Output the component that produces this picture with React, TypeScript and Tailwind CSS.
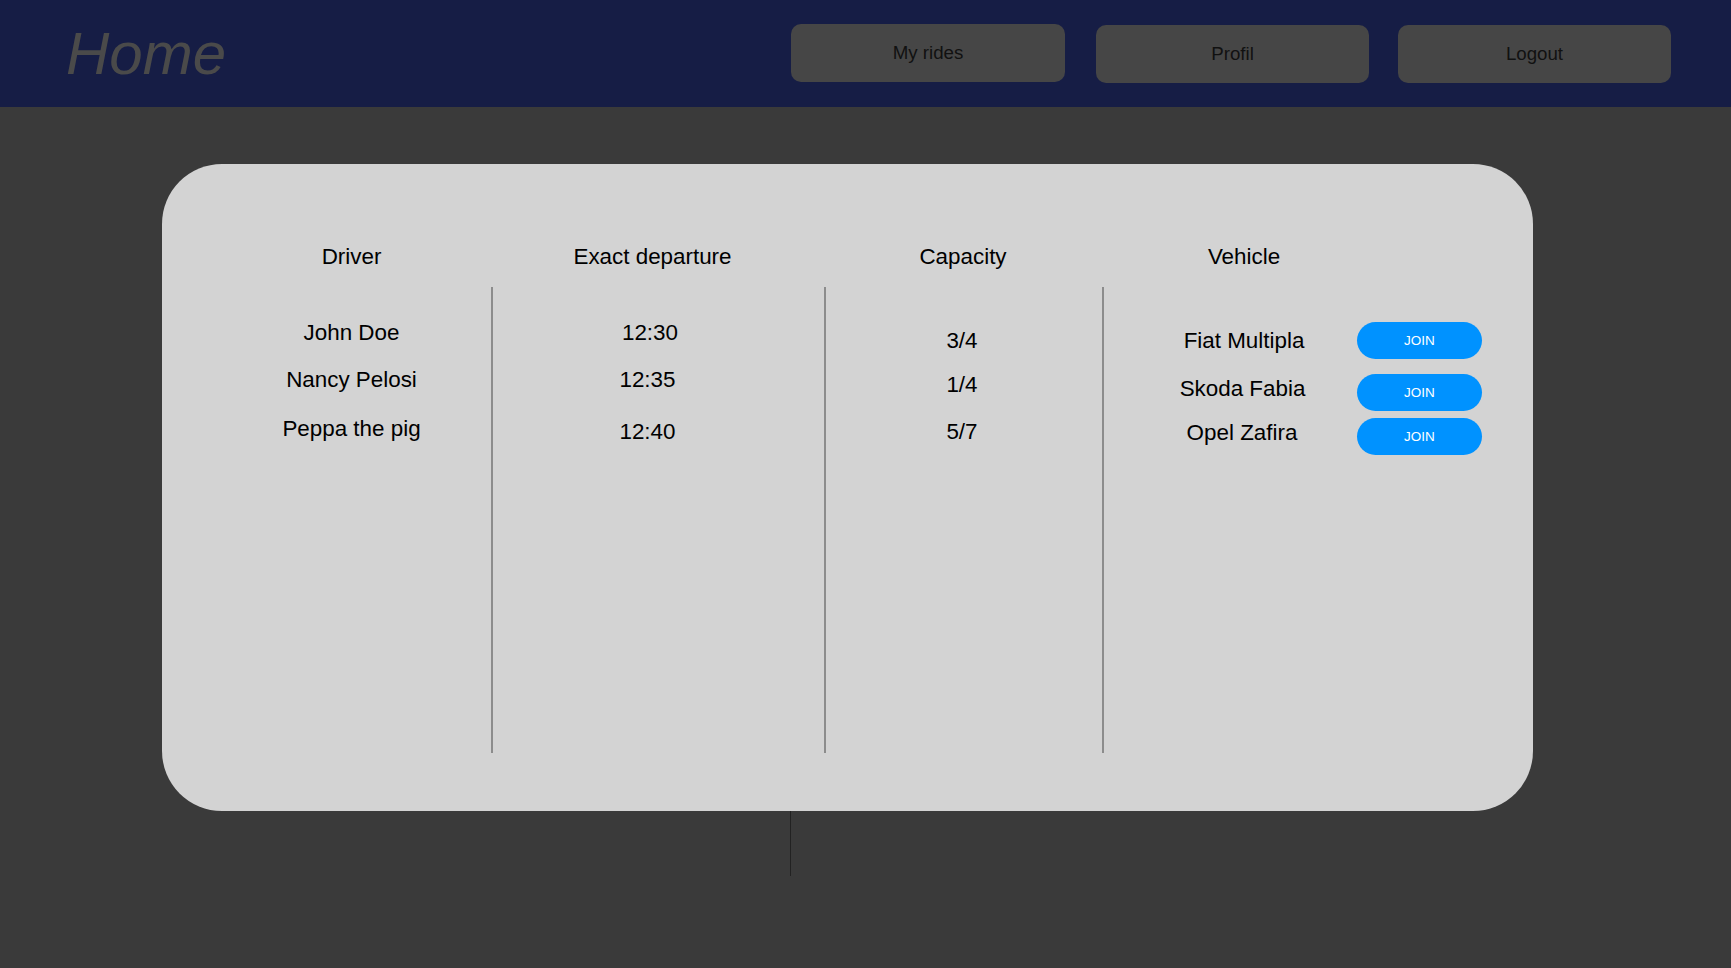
const rides = [
  { driver: 'John Doe', time: '12:30', capacity: '3/4', vehicle: 'Fiat Multipla' },
  { driver: 'Nancy Pelosi', time: '12:35', capacity: '1/4', vehicle: 'Skoda Fabia' },
  { driver: 'Peppa the pig', time: '12:40', capacity: '5/7', vehicle: 'Opel Zafira' },
];

function NavButton({ label, className = '' }: { label: string; className?: string }) {
  return (
    <button className={`h-[58px] rounded-[10px] bg-[#464646] text-[18.7px] text-[#111] ${className}`}>
      {label}
    </button>
  );
}

function JoinButton() {
  return (
    <button className="w-[125px] h-[37px] rounded-full bg-[#0092ff] text-white text-[13.5px]">
      JOIN
    </button>
  );
}

export default function App() {
  return (
    <div className="min-h-[968px] bg-[#3a3a3a] font-['Liberation_Sans',Arial,sans-serif]">
      <header className="h-[107px] bg-[#161d45] flex items-center pl-[66px] pr-[60px]">
        <h1 className="italic text-[60px] leading-none text-[#4a4a4a]">Home</h1>
        <nav className="ml-auto flex items-start">
          <NavButton label="My rides" className="w-[274px]" />
          <NavButton label="Profil" className="w-[273px] ml-[31px] mt-px" />
          <NavButton label="Logout" className="w-[273px] ml-[29px] mt-px" />
        </nav>
      </header>

      <main className="pt-[57px]">
        <div className="ml-[162px] w-[1371px] rounded-[60px] bg-[#d3d3d3] pt-[80px] pl-[50px] pr-[51px] pb-[58px] text-[22.4px] leading-[26px] text-black">
          {/* headers */}
          <div className="flex">
            <div className="w-[279px] text-center">Driver</div>
            <div className="w-[333px] pr-[10px] text-center">Exact departure</div>
            <div className="w-[278px] text-center">Capacity</div>
            <div className="flex-1 pl-[61px]">
              <div className="w-[162px] text-center">Vehicle</div>
            </div>
          </div>

          {/* body */}
          <div className="mt-[17px] flex h-[466px]">
            <div className="w-[279px] pt-[33px] flex flex-col items-center">
              <div>{rides[0].driver}</div>
              <div className="mt-[21px]">{rides[1].driver}</div>
              <div className="mt-[23px]">{rides[2].driver}</div>
            </div>

            <div className="w-[333px] border-l-2 border-[#8c8c8c] pt-[33px] pr-[22px] flex flex-col items-center">
              <div className="ml-[5px]">{rides[0].time}</div>
              <div className="mt-[21px]">{rides[1].time}</div>
              <div className="mt-[26px]">{rides[2].time}</div>
            </div>

            <div className="w-[278px] border-l-2 border-[#8c8c8c] pt-[41px] pr-[4px] flex flex-col items-center">
              <div>{rides[0].capacity}</div>
              <div className="mt-[18px]">{rides[1].capacity}</div>
              <div className="mt-[21px]">{rides[2].capacity}</div>
            </div>

            <div className="flex-1 border-l-2 border-[#8c8c8c] pt-[35px] pl-[59px] flex flex-col">
              <div className="flex items-center gap-[32px]">
                <div className="w-[162px] text-center">{rides[0].vehicle}</div>
                <JoinButton />
              </div>
              <div className="mt-[15px] flex items-center gap-[32px]">
                <div className="w-[162px] pr-[3px] text-center mb-[7px]">{rides[1].vehicle}</div>
                <JoinButton />
              </div>
              <div className="mt-[7px] flex items-center gap-[32px]">
                <div className="w-[162px] pr-[4px] text-center mb-[8px]">{rides[2].vehicle}</div>
                <JoinButton />
              </div>
            </div>
          </div>
        </div>

        <div className="ml-[790px] w-px h-[65px] bg-[#222]" />
      </main>
    </div>
  );
}
